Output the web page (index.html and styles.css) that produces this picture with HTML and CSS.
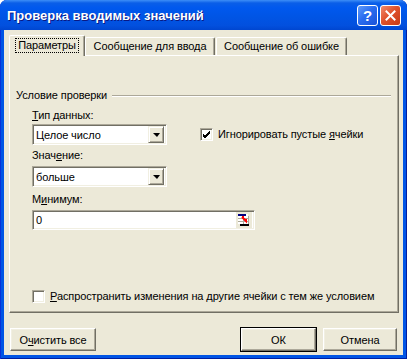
FILE: index.html
```html
<!DOCTYPE html>
<html lang="ru">
<head>
    <meta charset="UTF-8">
    <title>Проверка вводимых значений</title>
    <link rel="stylesheet" href="styles.css">
</head>
<body>
    <div class="window">
        <div class="titlebar">
            <span class="title">Проверка вводимых значений</span>
            <div class="caption-buttons">
                <div class="cap-btn help">?</div>
                <div class="cap-btn close">
                    <svg width="11" height="11" viewBox="0 0 11 11">
                        <path d="M1.5 1.5 L9.5 9.5 M9.5 1.5 L1.5 9.5" stroke="#fff" stroke-width="2" stroke-linecap="square"/>
                    </svg>
                </div>
            </div>
        </div>

        <div class="client">
            <div class="tabs">
                <div class="tab active"><span class="focus">Параметры</span></div>
                <div class="tab tab-input">Сообщение для ввода</div>
                <div class="tab tab-error">Сообщение об ошибке</div>
            </div>

            <div class="panel">
                <div class="group-title">
                    <span>Условие проверки</span>
                    <span class="etched"></span>
                </div>

                <div class="fields">
                    <div class="label"><u>Т</u>ип данных:</div>
                    <div class="row">
                        <div class="combo">
                            <span class="combo-text">Целое число</span>
                            <span class="drop-btn"><span class="arrow"></span></span>
                        </div>
                        <label class="check">
                            <span class="box checked">
                                <svg width="9" height="9" viewBox="0 0 9 9">
                                    <path d="M1 4 L3 6 L8 1 M1 5 L3 7 L8 2 M1 6 L3 8 L8 3" stroke="#000" stroke-width="1" fill="none"/>
                                </svg>
                            </span>
                            <span>Игнорировать пустые <u>я</u>чейки</span>
                        </label>
                    </div>

                    <div class="label gap-small">Знач<u>е</u>ние:</div>
                    <div class="combo">
                        <span class="combo-text">больше</span>
                        <span class="drop-btn"><span class="arrow"></span></span>
                    </div>

                    <div class="label gap-large">М<u>и</u>нимум:</div>
                    <div class="edit">
                        <span class="edit-text">0</span>
                        <span class="ref-btn">
                            <svg width="15" height="14" viewBox="0 0 15 14">
                                <rect x="1" y="1" width="10" height="10" fill="#fff"/>
                                <rect x="1" y="1" width="8" height="2" fill="#000080"/>
                                <path d="M1 5.5 H11 M1 8.5 H11 M6.5 3 V11 M11.5 3 V12" stroke="#aca899" stroke-width="1"/>
                                <rect x="3" y="11" width="9" height="2" fill="#000"/>
                                <path d="M5 4 L9 8 L9 6 M5 4 L7 4" stroke="#f00" stroke-width="2" fill="none"/>
                            </svg>
                        </span>
                    </div>
                </div>

                <label class="check bottom-check">
                    <span class="box"></span>
                    <span><u>Р</u>аспространить изменения на другие ячейки с тем же условием</span>
                </label>
            </div>

            <div class="buttons">
                <div class="btn btn-clear"><span>О<u>ч</u>истить все</span></div>
                <div class="spacer"></div>
                <div class="btn default">ОК</div>
                <div class="btn">Отмена</div>
            </div>
        </div>
    </div>
</body>
</html>
```

FILE: styles.css
```css
:root {
    --face: #ece9d8;
    --light: #f1efe2;
    --shadow: #aca899;
    --dark: #716f64;
    --frame: #0055e5;
}

* {
    margin: 0;
    padding: 0;
    box-sizing: border-box;
}

body {
    font-family: 'Liberation Sans', Arial, sans-serif;
    font-size: 11px;
    letter-spacing: -0.1px;
    color: #000;
    background: #fff;
}

.window {
    width: 407px;
    height: 359px;
    display: flex;
    flex-direction: column;
    background: var(--frame);
    border-radius: 7px 7px 0 0;
    box-shadow: inset 1px 0 #0831d9, inset -1px 0 #001ea0, inset 0 -1px #001ea0;
}

/* title bar */
.titlebar {
    height: 30px;
    display: flex;
    align-items: center;
    justify-content: space-between;
    padding: 0 6px 0 7px;
    border-radius: 7px 7px 0 0;
    background: linear-gradient(#3d8ef7 0, #0a5ee8 3px, #0058ee 8px, #0055e5 55%, #0250de 85%, #0046d0 100%);
}

.title {
    color: #fff;
    font-weight: 700;
    font-size: 13px;
    letter-spacing: 0;
    text-shadow: 1px 1px #0a1883;
    padding-top: 1px;
}

.caption-buttons {
    display: flex;
    gap: 2px;
}

.cap-btn {
    width: 21px;
    height: 21px;
    border: 1px solid #fff;
    border-radius: 3px;
    display: flex;
    align-items: center;
    justify-content: center;
    color: #fff;
}

.help {
    background: linear-gradient(135deg, #5f9bfa 0%, #2a6df0 45%, #1a52d8 100%);
    font-weight: 700;
    font-size: 15px;
}

.close {
    background: linear-gradient(135deg, #f08a6c 0%, #e0522c 45%, #c63a16 100%);
}

/* client area */
.client {
    flex: 1;
    margin: 0 4px 4px 4px;
    background: var(--face);
    display: flex;
    flex-direction: column;
    padding-top: 5px;
}

.tabs {
    display: flex;
    align-items: flex-end;
    padding-left: 5px;
    position: relative;
    z-index: 1;
}

.tab {
    height: 18px;
    display: flex;
    align-items: center;
    justify-content: center;
    background: var(--face);
    border-top: 1px solid #fff;
    border-left: 1px solid #fff;
    border-right: 1px solid var(--dark);
    box-shadow: inset -1px 0 var(--shadow);
    border-radius: 2px 2px 0 0;
    padding-bottom: 1px;
}

.tab.active {
    width: 76px;
    height: 21px;
    margin-bottom: -1px;
    padding-bottom: 2px;
}

.tab-input {
    width: 130px;
    margin-right: 1px;
}

.tab-error {
    width: 131px;
}

.focus {
    border: 1px dotted #000;
    padding: 0 2px;
    line-height: 13px;
}

.panel {
    flex: 1;
    margin: 0 4px 0 5px;
    border-top: 1px solid #fff;
    border-left: 1px solid #fff;
    border-right: 1px solid var(--dark);
    border-bottom: 1px solid var(--dark);
    box-shadow: inset -1px -1px var(--shadow);
    display: flex;
    flex-direction: column;
    padding: 33px 7px 9px 6px;
}

.group-title {
    display: flex;
    align-items: center;
    gap: 5px;
    line-height: 13px;
}

.etched {
    flex: 1;
    height: 2px;
    border-top: 1px solid var(--shadow);
    border-bottom: 1px solid #fff;
}

.fields {
    margin-left: 16px;
    padding-top: 7px;
    display: flex;
    flex-direction: column;
}

.label {
    line-height: 13px;
    margin-bottom: 2px;
}

.gap-small {
    margin-top: 4px;
    margin-bottom: 4px;
}

.gap-large {
    margin-top: 6px;
    margin-bottom: 4px;
}

.row {
    display: flex;
    align-items: center;
    gap: 33px;
}

.combo {
    width: 135px;
    height: 21px;
    background: #fff;
    border: 1px solid;
    border-color: var(--shadow) #fff #fff var(--shadow);
    box-shadow: inset 1px 1px var(--dark), inset -1px -1px var(--light);
    display: flex;
    align-items: center;
    padding: 2px;
}

.combo-text {
    flex: 1;
    padding-left: 1px;
}

.drop-btn {
    width: 16px;
    height: 17px;
    background: var(--face);
    border: 1px solid;
    border-color: var(--light) var(--dark) var(--dark) var(--light);
    box-shadow: inset 1px 1px #fff, inset -1px -1px var(--shadow);
    display: flex;
    align-items: center;
    justify-content: center;
}

.arrow {
    width: 0;
    height: 0;
    border-left: 4px solid transparent;
    border-right: 3px solid transparent;
    border-top: 4px solid #000;
}

.edit {
    width: 223px;
    height: 20px;
    background: #fff;
    border: 1px solid;
    border-color: var(--shadow) #fff #fff var(--shadow);
    box-shadow: inset 1px 1px var(--dark), inset -1px -1px var(--light);
    display: flex;
    align-items: center;
    padding: 2px;
}

.edit-text {
    flex: 1;
    padding-left: 1px;
}

.ref-btn {
    width: 16px;
    height: 16px;
    background: var(--face);
    display: flex;
    align-items: center;
    justify-content: center;
}

.check {
    display: flex;
    align-items: center;
    gap: 5px;
    line-height: 13px;
}

.box {
    width: 13px;
    height: 13px;
    background: #fff;
    border: 1px solid;
    border-color: var(--shadow) #fff #fff var(--shadow);
    box-shadow: inset 1px 1px var(--dark), inset -1px -1px var(--light);
    display: flex;
    align-items: center;
    justify-content: center;
}

.bottom-check {
    margin-top: auto;
    margin-left: 16px;
}

/* dialog buttons */
.buttons {
    height: 42px;
    display: flex;
    align-items: flex-end;
    gap: 7px;
    padding: 0 6px 4px 6px;
}

.spacer {
    flex: 1;
}

.btn {
    width: 74px;
    height: 23px;
    background: var(--face);
    border: 1px solid;
    border-color: #fff var(--dark) var(--dark) #fff;
    box-shadow: inset -1px -1px var(--shadow), inset 1px 1px var(--light);
    display: flex;
    align-items: center;
    justify-content: center;
}

.btn-clear {
    width: 86px;
}

.btn.default {
    width: 75px;
    outline: 1px solid #000;
    outline-offset: 0;
    border-color: #fff var(--dark) var(--dark) #fff;
}
```
